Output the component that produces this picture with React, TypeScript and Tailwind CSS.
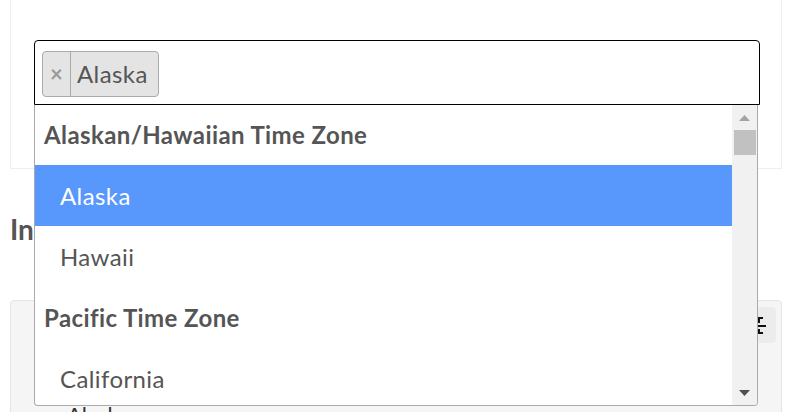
import React from 'react';

const font = { fontFamily: 'Lato, "Noto Sans", sans-serif' };

type Row = { label: string; group?: boolean; active?: boolean };

const rows: Row[] = [
  { label: 'Alaskan/Hawaiian Time Zone', group: true },
  { label: 'Alaska', active: true },
  { label: 'Hawaii' },
  { label: 'Pacific Time Zone', group: true },
  { label: 'California' },
  { label: 'Nevada' },
];

const Tag: React.FC<{ label: string }> = ({ label }) => (
  <div className="flex h-[46px] items-stretch rounded-[4px] border border-[#aaaaaa] bg-[#e4e4e4]">
    <span className="flex w-[28px] items-center justify-center border-r border-[#aaaaaa] text-[22px] font-bold leading-none text-[#999999]">
      ×
    </span>
    <span className="flex items-center pl-[6px] pr-[10px] text-[24px] tracking-[0.4px] text-[#555555]">{label}</span>
  </div>
);

const Scrollbar = () => (
  <div className="flex w-[25px] flex-col bg-[#f1f1f1]">
    <div className="flex h-[25px] items-center justify-center">
      <svg width="11" height="6" viewBox="0 0 11 6">
        <path d="M5.5 0L11 6H0z" fill="#a3a3a3" />
      </svg>
    </div>
    <div className="ml-[2px] mr-[1px] h-[25px] bg-[#c1c1c1]" />
    <div className="flex-1" />
    <div className="flex h-[25px] items-center justify-center">
      <svg width="11" height="6" viewBox="0 0 11 6">
        <path d="M0 0H11L5.5 6z" fill="#505050" />
      </svg>
    </div>
  </div>
);

export default function App() {
  return (
    <div
      className="relative h-[412px] w-[796px] overflow-hidden bg-white [font-variant-ligatures:none]"
      style={font}
    >
      <div className="ml-[10px] mr-[14px] h-[169px] border-x border-b border-[#eeeeee] pl-[23px] pr-[21px] pt-[40px]">
        <div className="flex h-[65px] items-start rounded-t-[4px] border border-black px-[7px] pt-[10px]">
          <Tag label="Alaska" />
        </div>
      </div>

      <h3 className="ml-[10px] mt-[42px] text-[28px] font-bold leading-[36px] text-[#555555]">Intervals</h3>

      <div className="ml-[10px] mr-[14px] mt-[53px] h-[140px] rounded-[4px] border border-[#e5e5e5] bg-[#f5f5f5] pr-[5px] pt-[6px]">
        <div className="flex justify-end">
          <button className="flex h-[36px] w-[40px] items-center justify-center rounded-[4px] bg-[#ececec]">
            <svg width="20" height="20" viewBox="0 0 20 20" fill="none" stroke="#111111" strokeWidth="2">
              <path d="M13 8V3h4" />
              <path d="M0 11h20" />
              <path d="M13 14v4h4" />
              <path d="M3 3h5v4H3z" />
            </svg>
          </button>
        </div>
        <div className="ml-[56px] mt-[55px] text-[22px] text-[#333333]">Alaska</div>
      </div>

      <div className="absolute left-[34px] top-[105px] flex h-[301px] w-[724px] overflow-hidden rounded-b-[4px] border-x border-b border-[#aaaaaa] bg-white">
        <ul className="flex-1 overflow-hidden">
          {rows.map((r, i) =>
            r.group ? (
              <li
                key={i}
                className={`flex ${i === 0 ? 'h-[60px]' : 'h-[61px]'} items-center pl-[9px] text-[24px] font-bold tracking-[0.4px] text-[#555555]`}
              >
                {r.label}
              </li>
            ) : (
              <li
                key={i}
                className={`flex h-[61px] items-center pl-[25px] text-[24px] tracking-[0.4px] ${
                  r.active ? 'bg-[#5897fb] text-white' : 'text-[#555555]'
                }`}
              >
                {r.label}
              </li>
            )
          )}
        </ul>
        <Scrollbar />
      </div>
    </div>
  );
}
